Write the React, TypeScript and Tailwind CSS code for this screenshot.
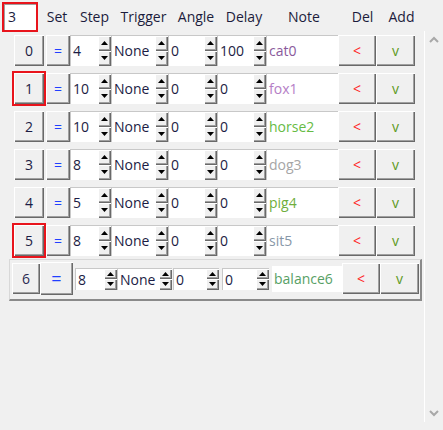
import React from "react";

interface RowData {
  idx: number;
  step: string;
  delay: string;
  note: string;
  noteColor: string;
  marked?: boolean;
}

const rows: RowData[] = [
  { idx: 0, step: "4", delay: "100", note: "cat0", noteColor: "text-[#8a5a9c]" },
  { idx: 1, step: "10", delay: "0", note: "fox1", noteColor: "text-[#b57ec6]", marked: true },
  { idx: 2, step: "10", delay: "0", note: "horse2", noteColor: "text-[#66bb44]" },
  { idx: 3, step: "8", delay: "0", note: "dog3", noteColor: "text-[#a6a6a6]" },
  { idx: 4, step: "5", delay: "0", note: "pig4", noteColor: "text-[#6fae3c]" },
  { idx: 5, step: "8", delay: "0", note: "sit5", noteColor: "text-[#8797a8]", marked: true },
];

const raised = "bg-[#f0f0f0] shadow-[inset_1px_1px_0_#ffffff,inset_-1px_-1px_0_#696969,inset_-2px_-2px_0_#a0a0a0]";

function Arrows() {
  return (
    <div className="flex flex-col w-[13px] h-full">
      <div className={"flex-1 flex items-center justify-center " + raised}>
        <svg width="7" height="4" viewBox="0 0 7 4">
          <polygon points="3.5,0 7,4 0,4" fill="#000" />
        </svg>
      </div>
      <div className={"flex-1 flex items-center justify-center " + raised}>
        <svg width="7" height="4" viewBox="0 0 7 4">
          <polygon points="0,0 7,0 3.5,4" fill="#000" />
        </svg>
      </div>
    </div>
  );
}

function Spin({ w, h, value }: { w: string; h: string; value: string }) {
  return (
    <div className={"flex bg-white border-t border-l border-[#c8c8c8] " + w + " " + h}>
      <div className="flex-1 flex items-center pl-[2px] text-[#1c1c44] overflow-hidden">{value}</div>
      <Arrows />
    </div>
  );
}

function Btn({ w, h, children, color }: { w: string; h: string; children: React.ReactNode; color: string }) {
  return <div className={"flex items-center justify-center " + raised + " " + w + " " + h + " " + color}>{children}</div>;
}

function Row({ r }: { r: RowData }) {
  return (
    <div className="flex items-center h-[38px] pl-[12px]">
      <div className={"flex items-center justify-center w-[34px] h-[35px] border-2 " + (r.marked ? "border-[#e8141c]" : "border-transparent")}>
        <Btn w="w-[30px]" h="h-[31px]" color="text-[#1c1c44]">{r.idx}</Btn>
      </div>
      <Btn w="w-[24px]" h="h-[31px]" color="text-[#2040ff]">=</Btn>
      <Spin w="w-[41px]" h="h-[31px]" value={r.step} />
      <Spin w="w-[57px]" h="h-[31px]" value="None" />
      <Spin w="w-[49px]" h="h-[31px]" value="0" />
      <Spin w="w-[49px]" h="h-[31px]" value={r.delay} />
      <div className={"flex items-center pl-[2px] bg-white border-t border-l border-[#c8c8c8] w-[72px] h-[31px] " + r.noteColor}>{r.note}</div>
      <Btn w="w-[38px]" h="h-[31px]" color="text-[#ff2626]">&lt;</Btn>
      <Btn w="w-[39px]" h="h-[31px]" color="text-[#5e9a1e]">v</Btn>
    </div>
  );
}

export default function App() {
  const font = { fontFamily: '"Open Sans", "Noto Sans", sans-serif' };
  return (
    <div style={font} className="w-[443px] h-[430px] bg-[#f0f0f0] text-[14px] text-[#1c1c3c] overflow-hidden flex flex-col">
      <div className="flex items-center h-[31px] pl-[2px] pt-[2px]">
        <div className="w-[36px] h-[30px] border-2 border-[#e8141c] bg-white flex items-center pl-[4px] shadow-[inset_1px_1px_0_#a0a0a0]">3</div>
        <span className="w-[38px] text-center">Set</span>
        <span className="w-[37px] text-center">Step</span>
        <span className="w-[61px] text-center">Trigger</span>
        <span className="w-[44px] text-center">Angle</span>
        <span className="w-[52px] text-center">Delay</span>
        <span className="w-[68px] text-center">Note</span>
        <span className="w-[49px] text-center">Del</span>
        <span className="w-[29px] text-center">Add</span>
      </div>
      <div className="flex flex-1">
        <div className="flex-1 flex flex-col">
          {rows.map((r) => (
            <Row key={r.idx} r={r} />
          ))}
          <div className="ml-[9px] mr-[2px] h-[42px] flex items-start border-l border-t border-[#d8d8d8] border-b-2 border-b-[#8a8a8a] border-r-2 border-r-[#8a8a8a]">
            <div className="flex items-center h-[33px] pl-[2px] mt-[2px]">
              <Btn w="w-[28px]" h="h-[31px]" color="text-[#2a2a50]">6</Btn>
              <Btn w="w-[33px]" h="h-[33px]" color="text-[#2040ff] text-[18px]">=</Btn>
              <div className="w-[2px]" />
              <Spin w="w-[42px]" h="h-[22px]" value="8" />
              <Spin w="w-[55px]" h="h-[22px]" value="None" />
              <div className="w-[1px]" />
              <Spin w="w-[46px]" h="h-[22px]" value="0" />
              <div className="w-[3px]" />
              <Spin w="w-[47px]" h="h-[22px]" value="0" />
              <div className="w-[3px]" />
              <div className="flex items-center pl-[2px] bg-white w-[70px] h-[26px] text-[#57a065]">balance6</div>
              <Btn w="w-[38px]" h="h-[31px]" color="text-[#ff2626]">&lt;</Btn>
              <Btn w="w-[39px]" h="h-[31px]" color="text-[#5e9a1e]">v</Btn>
            </div>
          </div>
        </div>
        <div className="w-[19px] h-[391px] border-l border-white flex flex-col justify-between items-center py-[5px]">
          <svg width="10" height="7" viewBox="0 0 10 7">
            <polyline points="1,6 5,2 9,6" fill="none" stroke="#a8a8a8" strokeWidth="2" />
          </svg>
          <svg width="10" height="7" viewBox="0 0 10 7">
            <polyline points="1,1 5,5 9,1" fill="none" stroke="#a8a8a8" strokeWidth="2" />
          </svg>
        </div>
      </div>
    </div>
  );
}
